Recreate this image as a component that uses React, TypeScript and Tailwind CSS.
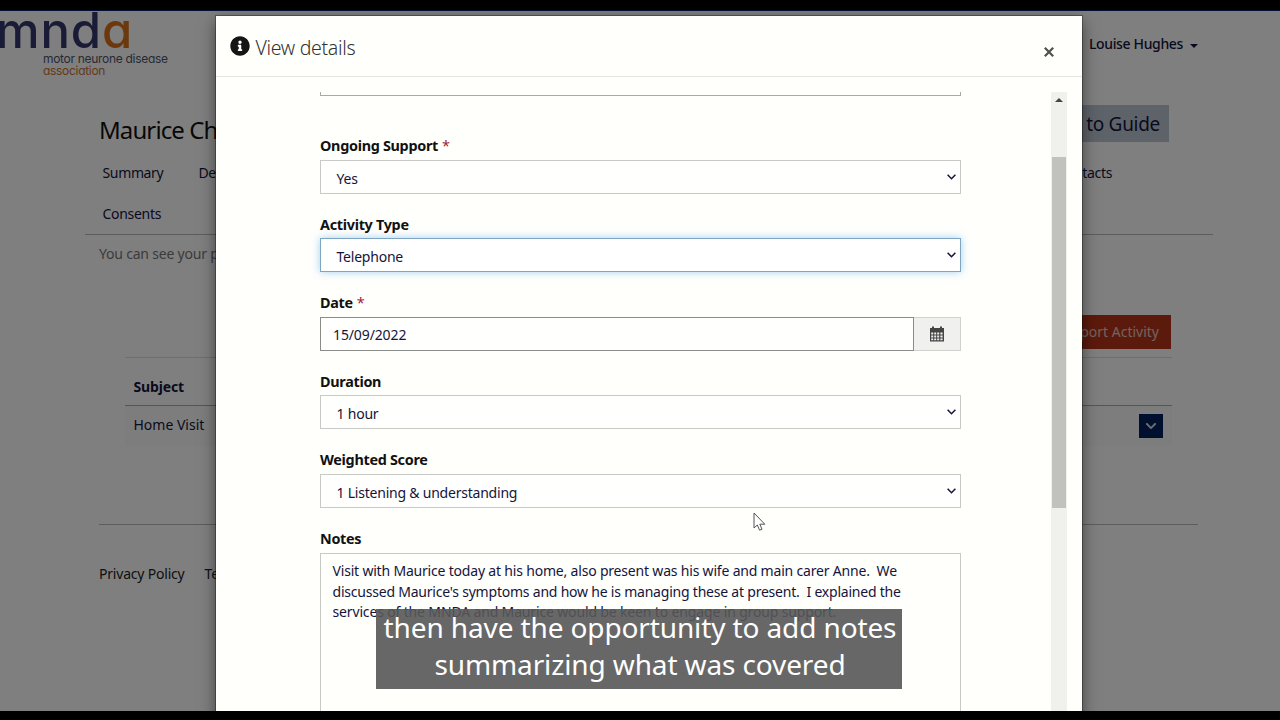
import { FaChevronDown, FaInfoCircle } from "react-icons/fa";

type SelectFieldProps = {
  label: string;
  value: string;
  required?: boolean;
  focused?: boolean;
};

function FieldLabel({ label, required }: { label: string; required?: boolean }) {
  return (
    <div className="mb-[3.5px] h-[21px] pt-px text-[14.4px] leading-5 font-bold tracking-[-0.3px] text-[#111]">
      {label}
      {required && <span className="ml-1 font-normal text-[#a02040]">*</span>}
    </div>
  );
}

function SelectField({ label, value, required, focused }: SelectFieldProps) {
  return (
    <div className="mb-5">
      <FieldLabel label={label} required={required} />
      <div
        className={
          focused
            ? "flex h-[34px] items-center justify-between border border-[#7da5c4] bg-white pr-1 pl-[15.5px] shadow-[0_0_8px_rgba(102,175,233,0.6)]"
            : "flex h-[34px] items-center justify-between border border-[#c8cac6] bg-[#fffffd] pr-1 pl-[15.5px]"
        }
      >
        <span className="pt-[3px] text-[14px] tracking-[-0.22px] text-[#14143c]">{value}</span>
        <svg width="9" height="6" viewBox="0 0 9 6" fill="none" stroke="#14143c" strokeWidth="1.5">
          <path d="M0.6 0.8 L4.5 4.7 L8.4 0.8" />
        </svg>
      </div>
    </div>
  );
}

function CalendarIcon() {
  return (
    <svg width="14" height="16" viewBox="0 0 14 16" fill="#444">
      <path d="M0 2h2V0.5h2V2h6V0.5h2V2h2v3.5H0z" />
      <path
        fillRule="evenodd"
        d="M0 5h14v10.5H0z M1.2 6.6v2h2v-2z M4.2 6.6v2h2v-2z M7.2 6.6v2h2v-2z M10.4 6.6v2h2.2v-2z M1.2 9.6v2h2v-2z M4.2 9.6v2h2v-2z M7.2 9.6v2h2v-2z M10.4 9.6v2h2.2v-2z M1.2 12.6v1.6h2v-1.6z M4.2 12.6v1.6h2v-1.6z M7.2 12.6v1.6h2v-1.6z M10.4 12.6v1.6h2.2v-1.6z"
      />
    </svg>
  );
}

function Logo() {
  return (
    <div className="font-['Inter',sans-serif] [font-feature-settings:'cv11']">
      <div className="h-[42px] text-[49px] leading-[39px] font-medium tracking-[0.9px] text-[#34366e]">
        <span className="-ml-1">mnd</span>
        <span className="text-[#d8701a]">a</span>
      </div>
      <div className="pl-[43px] text-[12px] leading-3 tracking-[-0.3px]">
        <div className="text-[#505468]">motor neurone disease</div>
        <div className="text-[#c87432]">association</div>
      </div>
    </div>
  );
}

function PortalPage() {
  return (
    <div className="h-[701px] overflow-hidden border-t border-[#00205c] bg-white text-[14px] text-[#14143c]">
      <header className="flex h-[94px] items-start justify-between pr-[82px]">
        <Logo />
        <div className="mt-[22px] flex items-center gap-[7px] text-[14px] font-medium tracking-[-0.35px]">
          Louise Hughes
          <span className="mt-1 border-x-4 border-t-4 border-x-transparent border-t-[#14143c]" />
        </div>
      </header>

      <div className="flex h-[37px] items-center justify-between pr-[111px] pl-[99px]">
        <h1 className="pt-[13px] text-[24px] tracking-[-0.9px] text-[#111]">Maurice Che</h1>
        <div className="flex h-[37px] items-center bg-[#bcc6d2] px-[9px] pt-0.5 text-[19px] tracking-[-0.3px]">
          Back to Guide
        </div>
      </div>

      <nav className="mr-[67px] ml-[85px] h-[93px] border-b border-[#bbb] pt-5 pl-[17.5px]">
        <div className="flex h-5 items-center text-[14px] tracking-[-0.35px]">
          <span className="w-24">Summary</span>
          <span>Details</span>
          <span className="mr-[101px] ml-auto">Contacts</span>
        </div>
        <div className="mt-[21px] flex h-5 items-center text-[14px] tracking-[-0.3px]">Consents</div>
      </nav>
      <p className="mt-[9px] h-5 pl-[99px] text-[14px] leading-5 tracking-[-0.2px] text-[#777]">
        You can see your previous
      </p>

      <div className="mt-[51px] flex justify-end pr-[109px]">
        <div className="flex h-[34px] items-center bg-[#b83418] px-3 pb-0.5 text-[14px] text-[#e0c8c0]">
          Add Support Activity
        </div>
      </div>

      <section className="mt-2 mr-[108px] ml-[125px] border-t border-[#ddd]">
        <div className="flex h-12 items-center border-b border-[#aaa] pt-2.5 pl-[8.5px] font-bold tracking-[-0.15px]">
          Subject
        </div>
        <div className="flex h-10 items-center justify-between bg-[#fafafa] pr-[9px] pl-[8.5px]">
          <span className="mb-1">Home Visit</span>
          <span className="flex h-6 w-6 items-center justify-center bg-[#00205c] text-[#d8d8e4]">
            <FaChevronDown size={12} />
          </span>
        </div>
      </section>

      <footer className="mt-[78px] mr-[82px] ml-[99px] flex gap-5 border-t border-[#bbb] pt-[38px] tracking-[-0.2px] text-[#222]">
        <span>Privacy Policy</span>
        <span>Terms</span>
      </footer>
    </div>
  );
}

function DetailsModal() {
  return (
    <div className="absolute top-[5px] left-[215.5px] flex h-[710px] w-[866px] flex-col bg-[#fffffc] shadow-[0_0_0_1px_rgba(0,0,0,0.3),0_5px_15px_rgba(0,0,0,0.5)]">
      <div className="flex h-[61px] shrink-0 items-center justify-between border-b border-[#e5e5e2] pr-7 pl-3.5">
        <div className="flex items-center gap-1.5 pt-[3px]">
          <FaInfoCircle size={20} className="mb-1 text-[#151515]" />
          <span className="text-[19.5px] font-light tracking-[-0.3px] text-[#333]">View details</span>
        </div>
        <svg width="10" height="10" viewBox="0 0 10 10" stroke="#505050" strokeWidth="2.2" className="mt-[11px]">
          <path d="M0.8 0.8 L9.2 9.2 M9.2 0.8 L0.8 9.2" />
        </svg>
      </div>

      <div className="mt-[15px] flex min-h-0 flex-1 pr-[14.5px] pl-[104.5px]">
        <div className="w-[641px]">
          <div className="mb-[39.4px] h-1 border-x border-b border-[#a8aaa6]" />
          <SelectField label="Ongoing Support" value="Yes" required />
          <SelectField label="Activity Type" value="Telephone" focused />

          <div className="mb-5">
            <FieldLabel label="Date" required />
            <div className="flex h-[34px]">
              <div className="flex flex-1 items-center border border-[#8a8c88] bg-[#fffffd] px-3 pt-px text-[14px] tracking-[-0.12px] text-[#14143c]">
                15/09/2022
              </div>
              <div className="flex w-[47px] items-center justify-center border border-l-0 border-[#d0d2ce] bg-[#f0f0ee]">
                <CalendarIcon />
              </div>
            </div>
          </div>

          <SelectField label="Duration" value="1 hour" />
          <SelectField label="Weighted Score" value="1 Listening & understanding" />

          <FieldLabel label="Notes" />
          <div className="mt-1 h-[200px] border border-[#c8cac6] px-[11.5px] pt-[7.5px] text-[14px] leading-[20.5px] tracking-[-0.19px] whitespace-pre text-[#14143c]">
            <div>Visit with Maurice today at his home, also present was his wife and main carer Anne.  We</div>
            <div className="tracking-[-0.215px]">
              discussed Maurice's symptoms and how he is managing these at present.  I explained the
            </div>
            <div className="tracking-[-0.15px]">
              services of the MNDA and Maurice would be keen to engage in group support.
            </div>
          </div>
        </div>

        {/* Scrollbar track and thumb */}
        <div className="ml-auto flex w-4 flex-col items-center bg-[#f0f0ed] pt-1.5">
          <span className="h-1 border-x-4 border-b-4 border-x-transparent border-b-[#444]" />
          <div className="mt-[55px] h-[351px] w-3.5 bg-[#c1c1be]" />
        </div>
      </div>
    </div>
  );
}

export default function App() {
  return (
    <div className="h-[720px] w-[1280px] overflow-hidden bg-black pt-2.5 font-['Noto_Sans',sans-serif]">
      <div className="relative h-[701px] overflow-hidden">
        <PortalPage />
        <div className="absolute inset-0 bg-black/50" />
        <div className="absolute inset-x-0 top-px bottom-0 overflow-hidden">
          <DetailsModal />
        </div>

        <svg className="absolute top-[502px] left-[753px]" width="13" height="20" viewBox="0 0 13 20" fill="#fff" stroke="#555">
          <path d="M1 1 V16 L4.3 13 L6.6 18.2 L9 17.2 L6.8 12.2 H11.8 Z" />
        </svg>

        <div className="absolute top-[599px] left-[376px] flex h-[80px] w-[526px] flex-col items-center bg-[#565656]/90 pl-0.5 text-[28px] leading-[37px] tracking-[-0.12px] whitespace-nowrap text-white">
          <div>then have the opportunity to add notes</div>
          <div>summarizing what was covered</div>
        </div>
      </div>
    </div>
  );
}
